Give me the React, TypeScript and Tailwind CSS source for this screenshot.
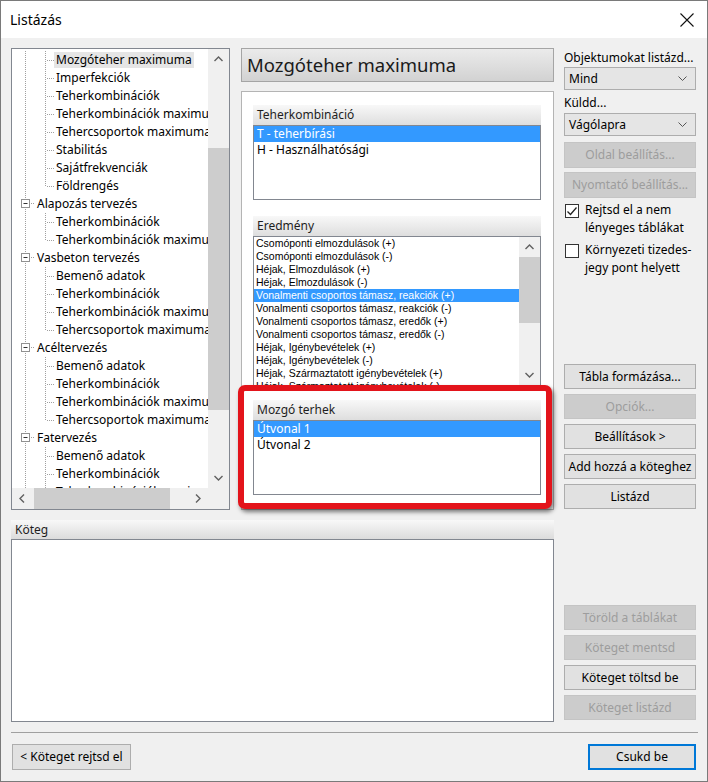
import clsx from 'clsx';

type TreeRow = { t: string; p?: boolean; last?: boolean; sel?: boolean };

const treeRows: TreeRow[] = [
  { t: 'Mozgóteher maximuma', sel: true },
  { t: 'Imperfekciók' },
  { t: 'Teherkombinációk' },
  { t: 'Teherkombinációk maximuma' },
  { t: 'Tehercsoportok maximuma' },
  { t: 'Stabilitás' },
  { t: 'Sajátfrekvenciák' },
  { t: 'Földrengés', last: true },
  { t: 'Alapozás tervezés', p: true },
  { t: 'Teherkombinációk' },
  { t: 'Teherkombinációk maximuma', last: true },
  { t: 'Vasbeton tervezés', p: true },
  { t: 'Bemenő adatok' },
  { t: 'Teherkombinációk' },
  { t: 'Teherkombinációk maximuma' },
  { t: 'Tehercsoportok maximuma', last: true },
  { t: 'Acéltervezés', p: true },
  { t: 'Bemenő adatok' },
  { t: 'Teherkombinációk' },
  { t: 'Teherkombinációk maximuma' },
  { t: 'Tehercsoportok maximuma', last: true },
  { t: 'Fatervezés', p: true },
  { t: 'Bemenő adatok' },
  { t: 'Teherkombinációk' },
  { t: 'Teherkombinációk maximuma' },
];

const results = [
  'Csomóponti elmozdulások (+)',
  'Csomóponti elmozdulások (-)',
  'Héjak, Elmozdulások (+)',
  'Héjak, Elmozdulások (-)',
  'Vonalmenti csoportos támasz, reakciók (+)',
  'Vonalmenti csoportos támasz, reakciók (-)',
  'Vonalmenti csoportos támasz, eredők (+)',
  'Vonalmenti csoportos támasz, eredők (-)',
  'Héjak, Igénybevételek (+)',
  'Héjak, Igénybevételek (-)',
  'Héjak, Származtatott igénybevételek (+)',
  'Héjak, Származtatott igénybevételek (-)',
];

const dots = { stroke: '#a0a0a0', strokeDasharray: '1 1', strokeWidth: 1 };

const Chevron = ({ dir, color = '#606060' }: { dir: 'up' | 'down' | 'left' | 'right'; color?: string }) => {
  const d = {
    up: 'M0.5 5 L4.5 1 L8.5 5',
    down: 'M0.5 1 L4.5 5 L8.5 1',
    left: 'M5 0.5 L1 4.5 L5 8.5',
    right: 'M1 0.5 L5 4.5 L1 8.5',
  }[dir];
  const vertical = dir === 'up' || dir === 'down';
  return (
    <svg width={vertical ? 9 : 6} height={vertical ? 6 : 9}>
      <path d={d} fill="none" stroke={color} strokeWidth="1.4" />
    </svg>
  );
};

const TreeLine = ({ row }: { row: TreeRow }) => {
  if (row.p) {
    return (
      <svg width="23" height="18" className="shrink-0">
        <line x1="13.5" y1="0" x2="13.5" y2="4" {...dots} />
        <line x1="13.5" y1="14" x2="13.5" y2="18" {...dots} />
        <line x1="19" y1="8.5" x2="23" y2="8.5" {...dots} />
        <rect x="9.5" y="4.5" width="8" height="8" fill="#fff" stroke="#919191" />
        <line x1="11.5" y1="8.5" x2="15.5" y2="8.5" stroke="#333" />
      </svg>
    );
  }
  return (
    <svg width="42" height="18" className="shrink-0">
      <line x1="13.5" y1="0" x2="13.5" y2="18" {...dots} />
      <line x1="33.5" y1="0" x2="33.5" y2={row.last ? 9 : 18} {...dots} />
      <line x1="35" y1="9.5" x2="42" y2="9.5" {...dots} />
    </svg>
  );
};

const Tree = () => (
  <div className="w-[219px] h-full border border-[#828790] bg-white flex flex-col">
    <div className="flex-1 flex min-h-0">
      <div className="w-[196px] overflow-hidden pt-[2px]">
        {treeRows.map((row, i) => (
          <div key={i} className="h-[18px] flex items-center whitespace-nowrap">
            <TreeLine row={row} />
            <span className={clsx('px-[2px] leading-[16px]', row.sel && 'bg-[#e5e5e5]')}>{row.t}</span>
          </div>
        ))}
      </div>
      <div className="w-[21px] bg-[#f0f0f0] flex flex-col">
        <div className="h-[20px] flex items-center justify-center"><Chevron dir="up" /></div>
        <div className="h-[79px]" />
        <div className="h-[262px] bg-[#cdcdcd]" />
        <div className="flex-1" />
        <div className="h-[20px] flex items-center justify-center"><Chevron dir="down" /></div>
      </div>
    </div>
    <div className="h-[21px] bg-[#f0f0f0] flex">
      <div className="w-[20px] flex items-center justify-center"><Chevron dir="left" /></div>
      <div className="w-[2px]" />
      <div className="w-[136px] bg-[#cdcdcd]" />
      <div className="flex-1" />
      <div className="w-[20px] flex items-center justify-center"><Chevron dir="right" /></div>
      <div className="w-[21px]" />
    </div>
  </div>
);

const GroupHeader = ({ children }: { children: string }) => (
  <div className="h-[20px] flex items-center pl-[4px] bg-linear-to-b from-[#f8f8f8] to-[#dedede] text-[#1e1e1e]">
    {children}
  </div>
);

const SimpleList = ({ items }: { items: string[] }) => (
  <div className="h-[75px] border border-[#828790] bg-white">
    {items.map((it, i) => (
      <div key={it} className={clsx('h-[16px] flex items-center pl-[3px]', i === 0 && 'bg-[#3399ff] text-white')}>
        {it}
      </div>
    ))}
  </div>
);

const Btn = ({ children, disabled, className }: { children: string; disabled?: boolean; className?: string }) => (
  <div
    className={clsx(
      'flex items-center justify-center border whitespace-nowrap',
      disabled ? 'bg-[#cccccc] border-[#c4c4c4] text-[#9d9d9d]' : 'bg-[#e1e1e1] border-[#adadad] text-black',
      className,
    )}
  >
    {children}
  </div>
);

const Combo = ({ value }: { value: string }) => (
  <div className="h-[23px] bg-[#e5e5e5] border border-[#adadad] flex items-center justify-between pl-[4px] pr-[8px]">
    <span>{value}</span>
    <svg width="9" height="5">
      <path d="M0.5 0.5 L4.5 4.5 L8.5 0.5" fill="none" stroke="#555" strokeWidth="1" />
    </svg>
  </div>
);

const Check = ({ checked, lines }: { checked?: boolean; lines: string[] }) => (
  <div className="flex items-start gap-[6px] ml-[1px]">
    <div className="mt-[3px] w-[14px] h-[14px] border border-[#333] bg-white flex items-center justify-center shrink-0">
      {checked && (
        <svg width="12" height="12">
          <path d="M1.5 6.5 L4.5 9.5 L10.5 2.5" fill="none" stroke="#222" strokeWidth="1.3" />
        </svg>
      )}
    </div>
    <div className="leading-[18px]">
      {lines.map(l => (
        <div key={l}>{l}</div>
      ))}
    </div>
  </div>
);

export default function App() {
  return (
    <div className="w-[708px] h-[782px] bg-[#f0f0f0] border border-[#7a7a7a] flex flex-col overflow-hidden font-['Noto_Sans',sans-serif] text-[12px] text-black">
      <div className="h-[37px] bg-white flex items-center justify-between pl-[9px] pr-[13px] shrink-0">
        <span className="text-[14px]">Listázás</span>
        <svg width="14" height="14">
          <path d="M0.5 0.5 L13.5 13.5 M13.5 0.5 L0.5 13.5" stroke="#111" strokeWidth="1.1" />
        </svg>
      </div>

      <div className="flex-1 flex flex-col pl-[10px] pr-[11px] pt-[10px]">
        <div className="h-[462px] flex">
          <Tree />

          <div className="w-[313px] ml-[11px] flex flex-col">
            <div className="h-[34px] border border-[#a5a5a5] bg-linear-to-b from-[#ebebeb] to-[#d2d2d2] flex items-center pl-[5px] text-[18.5px] text-[#1a1a1a]">
              Mozgóteher maximuma
            </div>
            <div className="flex-1 mt-[9px] border border-[#b4b4b4] bg-white pl-[11px] pr-[12px] pt-[13px] flex flex-col">
              <GroupHeader>Teherkombináció</GroupHeader>
              <SimpleList items={['T - teherbírási', 'H - Használhatósági']} />

              <div className="mt-[16px]">
                <GroupHeader>Eredmény</GroupHeader>
              </div>
              <div className="h-[150px] border border-[#828790] bg-white flex overflow-hidden font-['Liberation_Sans',Arial,sans-serif] text-[10.5px]">
                <div className="flex-1 overflow-hidden">
                  {results.map((r, i) => (
                    <div
                      key={r}
                      className={clsx('h-[13px] leading-[13px] pl-[2px] whitespace-nowrap', i === 4 && 'bg-[#3399ff] text-white')}
                    >
                      {r}
                    </div>
                  ))}
                </div>
                <div className="w-[21px] bg-[#f0f0f0] flex flex-col">
                  <div className="h-[20px] flex items-center justify-center"><Chevron dir="up" /></div>
                  <div className="h-[66px] bg-[#cdcdcd]" />
                  <div className="flex-1" />
                  <div className="h-[20px] flex items-center justify-center"><Chevron dir="down" /></div>
                </div>
              </div>

              <div className="relative mt-[-1px] -ml-[15px] -mr-[11px] border-[6px] border-[#e3141b] rounded-[7px] bg-white pl-[9px] pr-[5px] pt-[9px] pb-[8px] shadow-[2px_3px_4px_rgba(0,0,0,0.5)]">
                <GroupHeader>Mozgó terhek</GroupHeader>
                <SimpleList items={['Útvonal 1', 'Útvonal 2']} />
              </div>
            </div>
          </div>

          <div className="w-[132px] ml-[10px] flex flex-col justify-between pb-[1px]">
            <div className="flex flex-col">
              <div className="h-[19px] flex items-center whitespace-nowrap">Objektumokat listázd...</div>
              <Combo value="Mind" />
              <div className="h-[23px] flex items-center pt-[3px]">Küldd...</div>
              <Combo value="Vágólapra" />
              <Btn disabled className="h-[26px] mt-[6px]">Oldal beállítás...</Btn>
              <Btn disabled className="h-[26px] mt-[4px]">Nyomtató beállítás...</Btn>
              <div className="mt-[3px]">
                <Check checked lines={['Rejtsd el a nem', 'lényeges táblákat']} />
              </div>
              <div className="mt-[4px]">
                <Check lines={['Környezeti tizedes-', 'jegy pont helyett']} />
              </div>
            </div>
            <div className="flex flex-col gap-[5px]">
              <Btn className="h-[25px]">Tábla formázása...</Btn>
              <Btn disabled className="h-[25px]">Opciók...</Btn>
              <Btn className="h-[25px]">Beállítások &gt;</Btn>
              <Btn className="h-[25px]">Add hozzá a köteghez</Btn>
              <Btn className="h-[25px]">Listázd</Btn>
            </div>
          </div>
        </div>

        <div className="h-[202px] mt-[10px] flex">
          <div className="w-[543px] flex flex-col">
            <div className="h-[19px] flex items-center pl-[4px] bg-linear-to-b from-[#f8f8f8] to-[#dcdcdc] text-[#1e1e1e]">
              Köteg
            </div>
            <div className="flex-1 border border-[#828790] bg-white" />
          </div>
          <div className="w-[132px] ml-[10px] flex flex-col justify-end gap-[5px] pb-[2px]">
            <Btn disabled className="h-[25px]">Töröld a táblákat</Btn>
            <Btn disabled className="h-[25px]">Köteget mentsd</Btn>
            <Btn className="h-[25px]">Köteget töltsd be</Btn>
            <Btn disabled className="h-[25px]">Köteget listázd</Btn>
          </div>
        </div>

        <div className="mt-[10px] h-px w-[687px] bg-[#a0a0a0]" />

        <div className="mt-[11px] flex justify-between">
          <Btn className="h-[26px] w-[119px] ml-[1px]">&lt; Köteget rejtsd el</Btn>
          <div className="h-[26px] w-[108px] border-2 border-[#0078d7] bg-[#e1e1e1] flex items-center justify-center">
            Csukd be
          </div>
        </div>
      </div>
    </div>
  );
}
